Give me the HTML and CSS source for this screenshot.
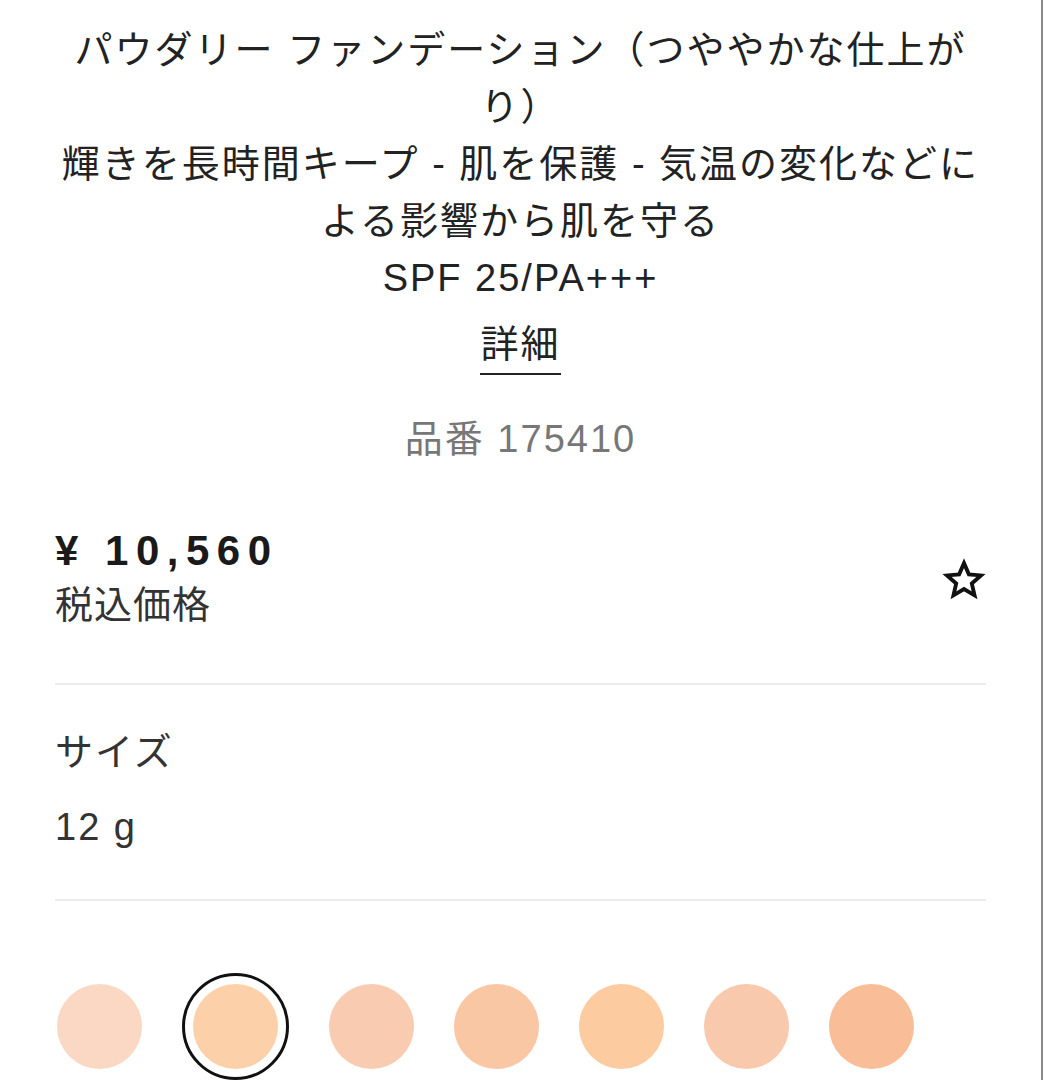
FILE: index.html
```html
<!DOCTYPE html>
<html lang="ja">
<head>
<meta charset="utf-8">
<title>パウダリー ファンデーション</title>
<link rel="stylesheet" href="styles.css">
</head>
<body>
<div class="page">
  <header class="intro">
    <h1 class="title">パウダリー ファンデーション（つややかな仕上がり）</h1>
    <p class="subtitle">輝きを長時間キープ - 肌を保護 - 気温の変化などによる影響から肌を守る</p>
    <p class="spf">SPF 25/PA+++</p>
    <a class="details" href="#">詳細</a>
    <p class="ref">品番 175410</p>
  </header>

  <section class="price-row">
    <div class="price-block">
      <div class="price">¥ 10,560</div>
      <div class="tax">税込価格</div>
    </div>
    <button class="fav" aria-label="お気に入り">
      <svg width="44" height="44" viewBox="0 0 24 24" fill="none" stroke="#111" stroke-width="2.1" stroke-linejoin="miter">
        <path d="M12 2.8l2.65 6.1 6.6.6-5 4.38 1.5 6.47L12 16.95l-5.75 3.4 1.5-6.47-5-4.38 6.6-.6z"/>
      </svg>
    </button>
  </section>

  <section class="size">
    <div class="label">サイズ</div>
    <div class="value">12 g</div>
  </section>

  <section class="swatches">
    <span class="swatch" style="background:#fbd8c4"></span>
    <span class="swatch selected"><span class="dot" style="background:#fcd0a9"></span></span>
    <span class="swatch" style="background:#f9cbb0"></span>
    <span class="swatch" style="background:#fac7a4"></span>
    <span class="swatch" style="background:#fccb9f"></span>
    <span class="swatch" style="background:#f9c9ae"></span>
    <span class="swatch" style="background:#f9be98"></span>
  </section>
</div>
</body>
</html>
```

FILE: styles.css
```css
html, body {
  margin: 0;
  padding: 0;
  overflow: hidden;
  background: #fff;
}

body {
  font-family: "Liberation Sans", "Noto Sans CJK JP", sans-serif;
  color: #222;
}

.page {
  width: 1043px;
  height: 1080px;
  border-right: 2px solid #8a8a8a;
  padding: 22px 55px 0 55px;
  box-sizing: border-box;
  overflow: hidden;
}

.intro {
  display: flex;
  flex-direction: column;
  align-items: center;
  text-align: center;
}

.title, .subtitle, .spf {
  margin: 0;
  font-size: 38px;
  font-weight: 400;
  line-height: 57px;
  letter-spacing: 2px;
  max-width: 925px;
}

.details {
  margin-top: 12px;
  font-size: 38px;
  line-height: 50px;
  letter-spacing: 2px;
  color: #222;
  text-decoration: none;
  padding-bottom: 4px;
  border-bottom: 2px solid #222;
}

.ref {
  margin: 39px 0 0;
  font-size: 38px;
  line-height: 50px;
  letter-spacing: 2px;
  color: #777;
}

.price-row {
  margin-top: 62px;
  display: flex;
  align-items: center;
  justify-content: space-between;
  padding-bottom: 49px;
  border-bottom: 2px solid #ececec;
}

.price {
  font-size: 42px;
  font-weight: 700;
  letter-spacing: 7.5px;
  line-height: 50px;
  color: #1a1a1a;
}

.tax {
  font-size: 38px;
  line-height: 58px;
  letter-spacing: 1px;
  color: #333;
}

.fav {
  border: 0;
  background: none;
  padding: 0;
  margin-right: 0;
  display: flex;
}

.size {
  padding: 42px 0 47px;
  border-bottom: 2px solid #ececec;
}

.size .label, .size .value {
  font-size: 38px;
  letter-spacing: 2px;
  line-height: 50px;
  color: #333;
}

.size .value {
  margin-top: 25px;
}

.swatches {
  display: flex;
  align-items: center;
  gap: 40px;
  padding-top: 72px;
  padding-left: 2px;
}

.swatch {
  display: block;
  width: 85px;
  height: 85px;
  border-radius: 50%;
  flex: none;
}

.swatch.selected {
  width: 107px;
  height: 107px;
  box-sizing: border-box;
  border: 3px solid #111;
  padding: 8px;
  display: flex;
}

.swatch .dot {
  display: block;
  width: 85px;
  height: 85px;
  border-radius: 50%;
}
```
